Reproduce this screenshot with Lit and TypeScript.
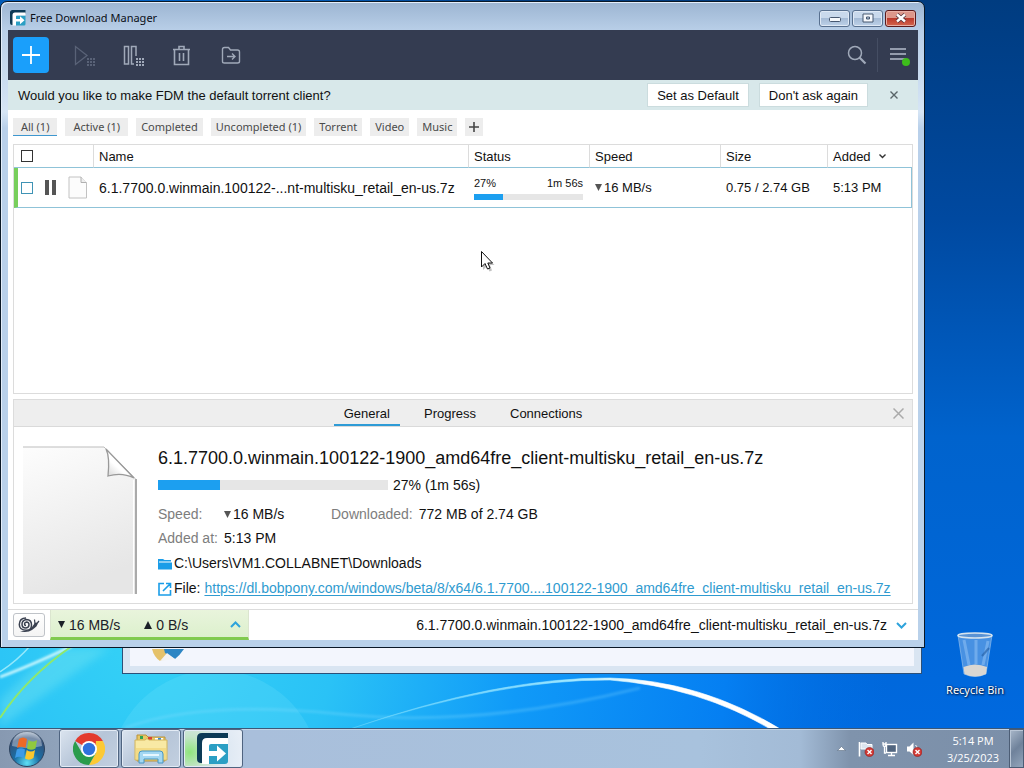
import { LitElement, html, svg, css } from "lit";
import { customElement } from "lit/decorators.js";
import { classMap } from "lit/directives/class-map.js";

const FILE_NAME = "6.1.7700.0.winmain.100122-1900_amd64fre_client-multisku_retail_en-us.7z";

const base = css`
  * { box-sizing: border-box; }
  svg { display: block; flex: none; }
  button {
    font: inherit; color: inherit; background: none; border: 0; padding: 0; margin: 0;
    display: flex; align-items: center; justify-content: center; white-space: nowrap;
  }
`;

const fdmLogo = (size: number) => html`
  <svg width=${size} height=${size} viewBox="0 0 32 32" aria-hidden="true">
    <path d="M5 0H31V7H12Q7 7 7 12V30H4Q0 30 0 26V5Q0 0 5 0Z" fill="#0c3a56" />
    <path d="M12 11H31V28Q31 31 28 31H12Z" fill="#2b9fc4" />
    <path d="M5 31V10Q5 5 10 5H31V11H14Q12 11 12 13V18H20V12.500L29 20.500L20 28.500V23H12V31Z" fill="#fff" />
  </svg>`;

const dots = svg`<g fill="currentColor">
  ${[0, 3, 6].map((y) => [0, 3, 6].map((x) => svg`<rect x=${14 + x} y=${14 + y} width="2" height="2" />`))}
</g>`;

const tools = [
  { label: "Start all", dim: true, art: svg`<path d="M2.500 2.500V20.500L14 11.500Z" fill="none" stroke="currentColor" stroke-width="1.300"/>${dots}` },
  { label: "Pause all", dim: false, art: svg`<path d="M2.500 2.500H6.500V20H2.500ZM12 20H9.500V2.500H14V12" fill="none" stroke="currentColor" stroke-width="1.500"/>${dots}` },
  { label: "Delete", dim: false, art: svg`<path d="M3.500 5.500V20.500H17.500V5.500M2 5.500H19M8 5V2.500H13V5M8.500 9V17M12.500 9V17" fill="none" stroke="currentColor" stroke-width="1.600"/>` },
  { label: "Move to folder", dim: false, art: svg`<path d="M2.500 17.500V5.500Q2.500 3.500 4.500 3.500H8.500L10.500 6H17.500Q19.500 6 19.500 8V17.500Q19.500 19 17.500 19H4.500Q2.500 19 2.500 17.500ZM7 12.500H15M12 9.500L15 12.500L12 15.500" fill="none" stroke="currentColor" stroke-width="1.400"/>` },
];

const filters = [
  { text: "All (1)", wide: true, on: true },
  { text: "Active (1)", wide: true },
  { text: "Completed" },
  { text: "Uncompleted (1)" },
  { text: "Torrent" },
  { text: "Video" },
  { text: "Music" },
];

const down = html`<svg width="7" height="7" viewBox="0 0 7 7" aria-hidden="true"><path d="M0 0H7L3.500 7Z" fill="currentColor"/></svg>`;
const up = html`<svg width="8" height="8" viewBox="0 0 8 8" aria-hidden="true"><path d="M0 8H8L4 0Z" fill="currentColor"/></svg>`;

@customElement("fdm-window")
class FdmWindow extends LitElement {
  static styles = [base, css`
    :host {
      display: flex; flex-direction: column; box-sizing: border-box; padding: 0 6px 7px 7px;
      border: 1px solid #0a1826; border-radius: 7px 7px 0 0; overflow: hidden;
      background: linear-gradient(#9cb5d2 0, #b9cfe8 29px, #d6e5f5 110px, #b9d0ea 126px, #b9d1ea);
      box-shadow: inset 1px 1px 0 #e4eefa;
      font: 14px/18px "Liberation Sans", Arial, sans-serif; color: #111;
    }
    .titlebar { height: 28px; flex: none; display: flex; align-items: center; gap: 4px; padding: 4px 2px 0 2px; }
    .caption { flex: 1; font: 11px/16px "Noto Sans", sans-serif; color: #0b0f18; }
    .controls { display: flex; gap: 2px; }
    .ctl { width: 31px; height: 17px; border: 1px solid #58708f; border-radius: 3px; background: linear-gradient(#c9d9ec 45%, #a5bbd6 50%, #bdd1e8); box-shadow: inset 0 0 0 1px #dfe9f5; }
    .ctl.close { border-color: #5b1a1c; background: linear-gradient(#dd978b 45%, #bb3a2c 50%, #d4664f); box-shadow: inset 0 0 0 1px #e8b0a6; }
    .client { flex: 1; min-height: 0; display: flex; flex-direction: column; background: #fff; }
    .toolbar { height: 50px; flex: none; background: #343c51; color: #a0a9b9; display: flex; align-items: center; padding-left: 5px; }
    .add { width: 36px; height: 36px; border-radius: 4px; background: #1a9ffb; margin-right: 10px; }
    .tool { width: 49px; height: 50px; }
    .tool.dim { color: #596277; }
    .spacer { flex: 1; }
    .right { width: 40px; height: 50px; }
    .divider { width: 1px; height: 34px; background: #454e63; }
    .notice { height: 30px; flex: none; display: flex; align-items: center; background: #d8e8ea; padding: 0 12px 0 10px; font-size: 13px; line-height: 20px; }
    .notice p { margin: 0; flex: 1; padding-top: 2px; }
    .notice .act { height: 24px; padding: 1px 9px 0; background: #fff; border: 1px solid #cbdcde; margin-left: 10px; }
    .notice .x { width: 24px; height: 24px; margin-left: 14px; }
    .filters { height: 34px; flex: none; display: flex; gap: 8px; align-items: center; padding: 0 5px; font: 11px/18px "Noto Sans", sans-serif; color: #4a4a4a; }
    .tag { height: 18px; padding: 0 5px; background: #ededed; border-bottom: 1px solid #ededed; }
    .tag.wide { padding: 0 8px; }
    .tag.on { border-color: #3e97cf; }
    .tag.plus { width: 18px; padding: 0; }
    .list { flex: 1; min-height: 0; margin: 0 5px; border: 1px solid #dcdcdc; overflow: hidden; }
    table { width: 100%; border-collapse: separate; border-spacing: 0; table-layout: fixed; }
    .c-check { width: 79px; } .c-status { width: 121px; } .c-speed { width: 131px; } .c-size { width: 107px; } .c-added { width: 85px; }
    th { height: 23px; padding: 1px 5px 0; text-align: left; font-weight: 400; font-size: 13px; line-height: 16px; border-left: 1px solid #dcdcdc; border-bottom: 1px solid #8fc3d8; }
    th:first-child { border-left: 0; padding: 0 0 0 7px; }
    td { height: 40px; padding: 0 0 0 6px; border-bottom: 1px solid #8fc3d8; white-space: nowrap; }
    td:first-child { border-left: 4px solid #78cf5c; padding-left: 3px; }
    td:last-child { border-right: 1px solid #8fc3d8; }
    td.sm { font-size: 13px; }
    td.status { padding: 0 6px 0 6px; }
    .lead { display: flex; align-items: center; }
    .lead button { width: 24px; height: 20px; margin: 0 6px 0 5px; }
    input[type="checkbox"] { appearance: none; display: block; width: 12px; height: 12px; margin: 0; border: 1px solid #333; background: #fff; }
    td input[type="checkbox"] { border-color: #3f93b5; }
    .sort, .speed { display: flex; align-items: center; gap: 8px; }
    .speed { gap: 2px; }
    .speed svg, .dl svg { color: #555; }
    .mini { display: flex; justify-content: space-between; font-size: 11px; line-height: 14px; }
    progress { appearance: none; display: block; width: 100%; height: 6px; border: 0; margin-top: 4px; background: #e6e6e6; }
    progress::-webkit-progress-bar { background: #e6e6e6; }
    progress::-webkit-progress-value { background: #1c9ff0; }
    .panel { flex: none; margin: 5px 5px; border: 1px solid #dcdcdc; }
    .tabs { height: 27px; display: grid; grid-template-columns: 28px 1fr 28px; background: #eee; border-bottom: 1px solid #dadada; font-size: 13px; }
    .tablist { grid-column: 2; display: flex; justify-content: center; gap: 14px; }
    .tab { padding: 3px 10px 0; border-bottom: 2px solid transparent; }
    .tab.on { border-color: #2e9bd6; }
    .detail { display: flex; gap: 20px; padding: 18px 8px 2px; height: 176px; }
    .info { flex: 1; min-width: 0; }
    h1 { margin: 0 0 6px; font-size: 18px; line-height: 26px; font-weight: 400; }
    .bar { display: flex; align-items: center; gap: 5px; margin-bottom: 9px; line-height: 16px; }
    .bar progress { width: 230px; height: 10px; margin: 0; }
    dl { display: grid; grid-template-columns: 66px 107px auto 1fr; margin: 0 0 1px; line-height: 24px; }
    dt { color: #7d7d7d; }
    dd { margin: 0; display: flex; align-items: center; gap: 2px; }
    .gap { padding-right: 6px; }
    .line { display: flex; align-items: center; gap: 2px; line-height: 25px; white-space: nowrap; }
    .line a { color: #2f9bd0; text-underline-offset: 2px; margin-left: 2px; }
    .foot { height: 31px; flex: none; display: flex; align-items: center; border-top: 1px solid #dcdcdc; padding-left: 5px; }
    .snail { width: 32px; height: 24px; border: 1px solid #bfc3c8; border-radius: 3px; margin-right: 5px; background: linear-gradient(#fff, #f4f4f4); }
    .rates { width: 199px; height: 30px; justify-content: flex-start; background: linear-gradient(#e9f4dc, #dcf0cd); border: solid #dbe5cf; border-width: 0 1px 0; border-bottom: 3px solid #80ca4f; padding: 2px 7px 0 7px; gap: 4px; color: #1b2028; }
    .rates .upload { margin-left: 20px; }
    .rates .chev { margin-left: auto; }
    .current { margin-left: auto; gap: 9px; padding-right: 11px; }
  `];

  render() {
    return html`
      <header class="titlebar">
        ${fdmLogo(16)}
        <span class="caption">Free Download Manager</span>
        <div class="controls">
          <button class="ctl" aria-label="Minimize"><svg width="12" height="10" viewBox="0 0 12 10"><rect x=".5" y="4.500" width="11" height="4" rx="1" fill="#f5f8fc" stroke="#475871"/></svg></button>
          <button class="ctl" aria-label="Maximize"><svg width="12" height="10" viewBox="0 0 12 10"><path d="M1 1H11V9H1ZM4.500 4V6H7.500V4Z" fill="#f5f8fc" fill-rule="evenodd" stroke="#475871"/></svg></button>
          <button class="ctl close" aria-label="Close"><svg width="12" height="10" viewBox="0 0 12 10"><path d="M2 1.500L10 8.500M10 1.500L2 8.500" stroke="#50313a" stroke-width="4"/><path d="M2 1.500L10 8.500M10 1.500L2 8.500" stroke="#fff" stroke-width="2.400"/></svg></button>
        </div>
      </header>
      <main class="client">
        <nav class="toolbar">
          <button class="add" aria-label="Add download"><svg width="20" height="20" viewBox="0 0 20 20"><path d="M10 1V19M1 10H19" stroke="#fff" stroke-width="1.800"/></svg></button>
          ${tools.map((t) => html`<button class=${classMap({ tool: true, dim: t.dim })} aria-label=${t.label}><svg width="22" height="23" viewBox="0 0 22 23">${t.art}</svg></button>`)}
          <span class="spacer"></span>
          <button class="right" aria-label="Search"><svg width="20" height="20" viewBox="0 0 20 20"><circle cx="8" cy="8" r="6.500" fill="none" stroke="currentColor" stroke-width="1.500"/><path d="M12.500 12.500L18.500 18.500" stroke="currentColor" stroke-width="2.200"/></svg></button>
          <span class="divider"></span>
          <button class="right" aria-label="Menu"><svg width="24" height="22" viewBox="0 0 24 22"><path d="M4 5H20M4 10H20M4 15H20" stroke="#b4bccb" stroke-width="1.600"/><circle cx="20" cy="18" r="4" fill="#3dbd1c"/></svg></button>
        </nav>
        <section class="notice">
          <p>Would you like to make FDM the default torrent client?</p>
          <button class="act">Set as Default</button>
          <button class="act">Don't ask again</button>
          <button class="x" aria-label="Dismiss"><svg width="8" height="8" viewBox="0 0 8 8"><path d="M.5 .5L7.500 7.500M7.500 .5L.5 7.500" stroke="#586468" stroke-width="1.400"/></svg></button>
        </section>
        <nav class="filters">
          ${filters.map((f) => html`<button class=${classMap({ tag: true, wide: !!f.wide, on: !!f.on })}>${f.text}</button>`)}
          <button class="tag plus" aria-label="Add tag"><svg width="10" height="10" viewBox="0 0 10 10"><path d="M5 0V10M0 5H10" stroke="#444" stroke-width="1.600"/></svg></button>
        </nav>
        <section class="list">
          <table>
            <colgroup><col class="c-check"><col><col class="c-status"><col class="c-speed"><col class="c-size"><col class="c-added"></colgroup>
            <thead><tr>
              <th><input type="checkbox" aria-label="Select all"></th>
              <th>Name</th><th>Status</th><th>Speed</th><th>Size</th>
              <th><span class="sort">Added <svg width="7" height="5" viewBox="0 0 7 5"><path d="M.5 .5L3.500 3.500L6.500 .5" fill="none" stroke="#333" stroke-width="1.400"/></svg></span></th>
            </tr></thead>
            <tbody><tr>
              <td><div class="lead">
                <input type="checkbox" aria-label="Select download">
                <button aria-label="Pause"><svg width="11" height="15" viewBox="0 0 11 15"><path d="M0 0H4V15H0ZM7 0H11V15H7Z" fill="#555"/></svg></button>
                <svg width="20" height="23" viewBox="0 0 20 23"><path d="M1 1H13L18.500 7V22H1Z" fill="#fcfcfc" stroke="#c2c2c2"/><path d="M13 1V6.500H18.500" fill="#eee" stroke="#b0b0b0"/></svg>
              </div></td>
              <td>6.1.7700.0.winmain.100122-...nt-multisku_retail_en-us.7z</td>
              <td class="status"><div class="mini"><span>27%</span><span>1m 56s</span></div><progress value="27" max="100" aria-label="Progress"></progress></td>
              <td class="sm"><span class="speed">${down}16 MB/s</span></td>
              <td class="sm">0.75 / 2.74 GB</td>
              <td class="sm">5:13 PM</td>
            </tr></tbody>
          </table>
        </section>
        <section class="panel">
          <div class="tabs">
            <div class="tablist">
              <button class="tab on">General</button><button class="tab">Progress</button><button class="tab">Connections</button>
            </div>
            <button aria-label="Close panel"><svg width="11" height="11" viewBox="0 0 11 11"><path d="M.5 .5L10.500 10.500M10.500 .5L.5 10.500" stroke="#aaa" stroke-width="1.500"/></svg></button>
          </div>
          <div class="detail">
            <svg width="116" height="151" viewBox="0 0 116 151" aria-hidden="true">
              <defs>
                <linearGradient id="pg" x1="0" y1="0" x2=".3" y2="1"><stop offset="0" stop-color="#fdfdfd"/><stop offset="1" stop-color="#e6e6e6"/></linearGradient>
                <linearGradient id="fold" x1="0" y1="1" x2=".6" y2=".3"><stop offset="0" stop-color="#cfcfcf"/><stop offset=".6" stop-color="#fff"/></linearGradient>
              </defs>
              <path d="M1 2H82L114 34V149H1Z" fill="url(#pg)"/>
              <path d="M1 2H82L113.500 34" fill="none" stroke="#bdbdbd"/>
              <path d="M114 34V149" stroke="#aaa" stroke-width="2"/><path d="M111.500 35V149" stroke="#fff"/>
              <path d="M84 4Q88 12 86 31Q100 27 112 33Z" fill="url(#fold)" stroke="#999" stroke-width="1.300"/>
            </svg>
            <div class="info">
              <h1>${FILE_NAME}</h1>
              <div class="bar"><progress value="27" max="100" aria-label="Progress"></progress>27% (1m 56s)</div>
              <dl>
                <dt>Speed:</dt><dd class="dl">${down}16 MB/s</dd><dt class="gap">Downloaded:</dt><dd>772 MB of 2.74 GB</dd>
                <dt>Added at:</dt><dd>5:13 PM</dd>
              </dl>
              <div class="line"><svg width="14" height="12" viewBox="0 0 14 12"><path d="M0 1H5L6.500 2H13V3.500H1V4.500H14V11.500H0Z" fill="#1a9de8"/></svg>C:\\Users\\VM1.COLLABNET\\Downloads</div>
              <div class="line"><svg width="14" height="14" viewBox="0 0 14 14"><path d="M6 1.500H1V13H12.500V8M8 1.500H12.500V6M12.500 1.500L5 9" fill="none" stroke="#1a9de8" stroke-width="1.600"/></svg>File: <a href="https://dl.bobpony.com/windows/beta/8/x64/">https://dl.bobpony.com/windows/beta/8/x64/6.1.7700....100122-1900_amd64fre_client-multisku_retail_en-us.7z</a></div>
            </div>
          </div>
        </section>
        <footer class="foot">
          <button class="snail" aria-label="Snail mode"><svg width="22" height="16" viewBox="0 0 22 16">
            <path d="M8 8.500Q6.500 8.500 6.500 7T8.500 5Q11 5 11 7.800T8 11Q4 11 4 7.200T8.300 2.500Q13.500 2.500 13.500 8T8.500 13.300Q1.300 13 1.300 7.500Q1.500 1 8 1" fill="none" stroke="#3a4150" stroke-width="1.500"/>
            <path d="M2 14.500Q10 16 14 13Q20 9 19.500 6.500Q18 4.500 16.500 6.500L14 10Q12 14 2 14.500Z" fill="#3a4150"/><path d="M17 7L16.500 2.500M18.500 7L21 4" stroke="#3a4150" stroke-width="1.200"/>
          </svg></button>
          <button class="rates">
            ${down}<span>16 MB/s</span><span class="upload">${up}</span><span>0 B/s</span>
            <svg class="chev" width="11" height="7" viewBox="0 0 11 7"><path d="M1 6L5.500 1.500L10 6" fill="none" stroke="#2ea3dc" stroke-width="2"/></svg>
          </button>
          <button class="current">${FILE_NAME}<svg width="11" height="7" viewBox="0 0 11 7"><path d="M1 1L5.500 5.500L10 1" fill="none" stroke="#2ea3dc" stroke-width="2"/></svg></button>
        </footer>
      </main>`;
  }
}

const redCross = svg`<circle cx="11.500" cy="11" r="4.500" fill="#d23a35" stroke="#8f1b1b" stroke-width=".6"/><path d="M9.500 9L13.500 13M13.500 9L9.500 13" stroke="#fff" stroke-width="1.400"/>`;

@customElement("desktop-taskbar")
class DesktopTaskbar extends LitElement {
  static styles = [base, css`
    :host {
      display: flex; align-items: stretch; height: 40px; box-sizing: border-box; border-top: 1px solid #3c5878;
      background: linear-gradient(90deg, #8799b1 0, #8fa2ba 56px, #a9bfdb 250px, #a8c2dd 700px, #a3bbd6 800px, #7f93ac 850px, #7b8fa9);
      box-shadow: inset 0 1px 0 #c3d4e6; color: #fff; font: 11px/17px "Open Sans", sans-serif;
    }
    .start { width: 54px; margin-right: 5px; }
    .apps { display: flex; gap: 2px; flex: 1; }
    .app { width: 60px; border: 1px solid #4f6480; border-radius: 3px; background: linear-gradient(135deg, #dbe4ef, #b6c5d8 50%, #c3d0e0); box-shadow: inset 0 0 0 1px #e3ebf5; }
    .app.active { background: radial-gradient(circle at 10% 60%, #8fe57c 0, #c4e4ca 28%, #dce7f2 60%, #e9eff7); }
    .tray { display: flex; align-items: center; gap: 8px; }
    .tray .arrow { margin-right: 4px; }
    .clock { width: 70px; margin: 0 1px 0 8px; text-align: center; }
    .peek { width: 15px; border: 1px solid #4c5d75; background: linear-gradient(135deg, #a9b8ca, #6f829b 50%, #93a5bb); box-shadow: inset 1px 1px 0 #b9c6d6; }
  `];

  render() {
    return html`
      <button class="start" aria-label="Start"><svg width="38" height="38" viewBox="0 0 38 38">
        <defs><radialGradient id="orb" cx=".5" cy=".9" r=".9"><stop offset="0" stop-color="#5fe0f5"/><stop offset=".4" stop-color="#1a6fa5"/><stop offset=".8" stop-color="#33517a"/><stop offset="1" stop-color="#a8b9cc"/></radialGradient></defs>
        <circle cx="19" cy="19" r="17.500" fill="url(#orb)" stroke="#2c425e"/>
        <path d="M4 16A15 15 0 0 1 34 16Q19 20 4 16Z" fill="#fff" opacity=".35"/>
        <path d="M11 9Q15 6 19 9L17.500 18Q13 15.500 9 18Z" fill="#ee6a26"/><path d="M20.500 10Q25 13 29 10L27.500 18.500Q23 21 19 18.500Z" fill="#90c93f"/>
        <path d="M8.800 19.500Q13 17 17 19.500L15.500 28Q11 25.500 7 28Z" fill="#3d9be8"/><path d="M18.700 20Q23 23 27 20L25.500 28Q21 31 17 28.500Z" fill="#fbc72d"/>
      </svg></button>
      <div class="apps">
        <button class="app" aria-label="Google Chrome"><svg width="32" height="32" viewBox="0 0 32 32">
          <path d="M16 16L2.140 8A16 16 0 0 1 29.860 8Z" fill="#e33b2e"/>
          <path d="M29.860 8A16 16 0 0 1 16 32L22.900 20V8Z" fill="#fcc934"/><path d="M2.140 8A16 16 0 0 0 16 32L22.900 20L16 16L9 20Z" fill="#2a9c4c"/>
          <circle cx="16" cy="16" r="8" fill="#fff"/><circle cx="16" cy="16" r="6.200" fill="#2f72dd"/>
        </svg></button>
        <button class="app" aria-label="File Explorer"><svg width="34" height="32" viewBox="0 0 34 32">
          <path d="M3 2H12L14 4H31V28H3Z" fill="#e8c967" stroke="#b8923d"/><path d="M6 3H9V6H6Z" fill="#2fa452"/><path d="M14 4H18V7H14Z" fill="#d9442f"/><path d="M21 5H29V8H21Z" fill="#fff"/><path d="M24 5H27V7H24Z" fill="#3c8bd2"/>
          <path d="M1 7H11L13 5.500L15 7H33V27H1Z" fill="#f8e9a4" stroke="#d2b45b"/><path d="M2 15H32V26H2Z" fill="#f3db85"/>
          <path d="M5 30V21Q5 18 8 18H26Q29 18 29 21V30H24V26H10V30Z" fill="#a4d8f2" stroke="#4796c4"/><path d="M9 21H25V23H9Z" fill="#e6f7ff"/>
        </svg></button>
        <button class="app active" aria-label="Free Download Manager">${fdmLogo(32)}</button>
      </div>
      <div class="tray">
        <svg class="arrow" width="9" height="5" viewBox="0 0 9 5"><path d="M.5 4.500L4.500 .5L8.500 4.500Z" fill="#fff" stroke="#4b5c73" stroke-width=".5"/></svg>
        <svg width="16" height="16" viewBox="0 0 16 16"><path d="M1.500 1V15.500" stroke="#fff" stroke-width="1.600"/><path d="M3 2H8L9 3.500H14V9H8L7 8H3Z" fill="#dce5ef" stroke="#fff"/>${redCross}</svg>
        <svg width="16" height="16" viewBox="0 0 16 16"><rect x="4.500" y="3.500" width="10" height="8" fill="#51657f" stroke="#fff" stroke-width="1.400"/><path d="M6 14.500H13M9.500 12V14.500M2.500 6V12H4M1 1V3.500Q1 5.500 2.500 5.500T4 3.500V1M1 3H4" fill="none" stroke="#fff" stroke-width="1.300"/></svg>
        <svg width="16" height="16" viewBox="0 0 16 16"><path d="M1 5.500H3.500L7.500 1.500V14L3.500 10.500H1Z" fill="#fff"/><path d="M9.500 4Q11 5.500 11 7" fill="none" stroke="#fff"/>${redCross}</svg>
        <div class="clock">5:14 PM<br>3/25/2023</div>
      </div>
      <button class="peek" aria-label="Show desktop"></button>`;
  }
}

@customElement("app-root")
class AppRoot extends LitElement {
  static styles = [base, css`
    :host { display: grid; grid-template-rows: 1fr 40px; height: 100vh; overflow: hidden; }
    .desktop { position: relative; overflow: hidden; background: #0a6fdd; }
    .wallpaper { position: absolute; inset: 0; width: 100%; height: 100%; }
    .behind { position: absolute; left: 122px; right: 102px; bottom: 54px; height: 60px; padding: 0 7px 7px; background: #d9e5f2; border: 1px solid #2c5078; }
    .pane { height: 100%; background: #f3f6fd; padding: 34px 0 0 20px; }
    fdm-window { position: absolute; left: 0; top: 1px; right: 99px; bottom: 80px; }
    .bin { position: absolute; right: 12px; bottom: 29px; width: 74px; flex-direction: column; gap: 3px; color: #fff; font: 11px/18px "Noto Sans", sans-serif; text-shadow: 1px 1px 2px #001c44, 0 0 2px #001c44; }
    .cursor { position: absolute; left: 480px; top: 250px; }
  `];

  render() {
    return html`
      <div class="desktop">
        <svg class="wallpaper" viewBox="0 0 1024 728" preserveAspectRatio="none" aria-hidden="true">
          <defs>
            <linearGradient id="sky" x1="0" y1="0" x2="0" y2="1"><stop offset="0" stop-color="#003c80"/><stop offset=".3" stop-color="#0049a0"/><stop offset=".6" stop-color="#0063cd"/><stop offset="1" stop-color="#0069df"/></linearGradient>
            <radialGradient id="glow" gradientUnits="userSpaceOnUse" cx="150" cy="640" r="740"><stop offset="0" stop-color="#35d2f6"/><stop offset=".25" stop-color="#2ac2f6"/><stop offset=".5" stop-color="#109af8"/><stop offset=".78" stop-color="#057ff2"/><stop offset="1" stop-color="#0070e4" stop-opacity="0"/></radialGradient>
            <linearGradient id="arc" x1="0" x2="1" y1="0" y2="0"><stop offset="0" stop-color="#8ce4ff" stop-opacity=".3"/><stop offset=".5" stop-color="#9be6ff"/><stop offset=".7" stop-color="#fff"/></linearGradient>
            <filter id="soft"><feGaussianBlur stdDeviation="1"/></filter>
            <filter id="softer"><feGaussianBlur stdDeviation="4"/></filter>
          </defs>
          <rect width="1024" height="728" fill="url(#sky)"/>
          <rect width="1024" height="728" fill="url(#glow)"/>
          <circle cx="215" cy="775" r="105" fill="#8fecff" opacity=".16"/>
          <path d="M0 700Q30 670 60 648H110Q50 690 0 728Z" fill="#8ff0f0" opacity=".3" filter="url(#softer)"/>
          <path d="M125 728Q200 700 340 714T640 688" fill="none" stroke="#8fe0ff" stroke-width="3" opacity=".25" filter="url(#soft)"/>
          <path d="M350 729Q500 677 610 678Q700 680 782 730H772Q700 687 610 680Q500 679 350 729Z" fill="url(#arc)" stroke="url(#arc)" stroke-width=".6"/>
          <path d="M0 677Q30 666 72 646" fill="none" stroke="#e6ffff" stroke-width="2.500" opacity=".85" filter="url(#soft)"/>
          <path d="M0 672Q18 660 30 646" fill="none" stroke="#d8ffff" stroke-width="1.500" opacity=".6"/>
          <path d="M0 718Q26 678 72 646" fill="none" stroke="#8fe86a" stroke-width="2"/>
        </svg>
        <div class="behind"><div class="pane"><svg width="36" height="16" viewBox="0 0 36 16">
          <path d="M2 0H17V9L10 12Q4 8 2 0Z" fill="#e5c26a"/><path d="M14 0H34Q30 6 25 10L15 4Z" fill="#2d86c4"/><path d="M10 12L17 4L25 10Z" fill="#f2f2f2"/></svg></div></div>
        <button class="bin">
          <svg width="38" height="46" viewBox="0 0 38 46" aria-hidden="true">
            <path d="M2 3L8 42Q19 47 30 42L36 3Z" fill="#78aee8" fill-opacity=".6" stroke="#8dbcec" stroke-opacity=".7"/>
            <path d="M7.500 35Q19 30 31 35L30 42Q19 47 8.500 42Z" fill="#d9d6d2"/>
            <path d="M8 8L13 33M20 8V32M32 9L27 33" stroke="#b9dcff" stroke-width="3" opacity=".35"/><path d="M26 24L33 16" stroke="#205aa0" stroke-width="2" opacity=".6"/>
            <ellipse cx="19" cy="3.500" rx="17" ry="2.500" fill="#5a93d4" stroke="#d5e3ee" stroke-width="1.600"/>
          </svg>Recycle Bin
        </button>
        <fdm-window></fdm-window>
        <svg class="cursor" width="16" height="22" viewBox="0 0 16 22" aria-hidden="true"><path d="M3 4V20L7 16L9.500 21.500L12 20.500L10 15H14.500Z" fill="#999" opacity=".6"/><path d="M1.500 1.500V17L5 13.500L7.500 19L10 18L7.800 13H12.500Z" fill="#fff" stroke="#111"/></svg>
      </div>
      <desktop-taskbar></desktop-taskbar>`;
  }
}
